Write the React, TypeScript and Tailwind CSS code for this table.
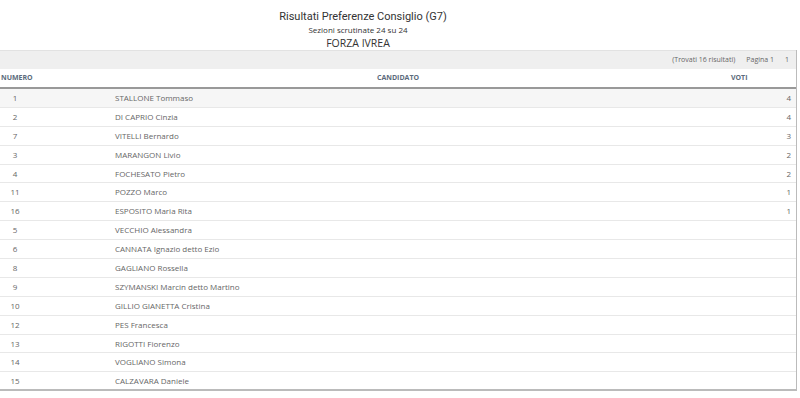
import React from "react";

const rows: [string, string, string][] = [
  ["1", "STALLONE Tommaso", "4"],
  ["2", "DI CAPRIO Cinzia", "4"],
  ["7", "VITELLI Bernardo", "3"],
  ["3", "MARANGON Livio", "2"],
  ["4", "FOCHESATO Pietro", "2"],
  ["11", "POZZO Marco", "1"],
  ["16", "ESPOSITO Maria Rita", "1"],
  ["5", "VECCHIO Alessandra", ""],
  ["6", "CANNATA Ignazio detto Ezio", ""],
  ["8", "GAGLIANO Rossella", ""],
  ["9", "SZYMANSKI Marcin detto Martino", ""],
  ["10", "GILLIO GIANETTA Cristina", ""],
  ["12", "PES Francesca", ""],
  ["13", "RIGOTTI Fiorenzo", ""],
  ["14", "VOGLIANO Simona", ""],
  ["15", "CALZAVARA Daniele", ""],
];

export default function App() {
  return (
    <div
      className="w-[800px] h-[398px] bg-white text-[#555] overflow-hidden"
      style={{ fontFamily: '"Open Sans", "Noto Sans", sans-serif' }}
    >
      <div className="flex flex-col items-center pt-[10px] pr-[84px] h-[50px] text-[#333]">
        <div className="text-[11px] leading-[14px] pl-[10px]" style={{ fontFamily: 'Roboto, sans-serif' }}>
          Risultati Preferenze Consiglio (G7)
        </div>
        <div className="text-[8px] leading-[12px]">Sezioni scrutinate 24 su 24</div>
        <div className="text-[10.5px] leading-[14px]">FORZA IVREA</div>
      </div>
      <div className="w-[797px] border-r border-[#bbb]">
        <div className="h-[19px] bg-[#efefef] border-t border-[#e2e2e2] flex items-center justify-end text-[7px] text-[#666] pr-[7px]">
          <span>(Trovati 16 risultati)</span>
          <span className="ml-[11px]">Pagina 1</span>
          <span className="ml-[11px]">1</span>
        </div>
        <div className="h-[20px] flex items-center border-b-2 border-[#999] text-[7px] font-bold text-[#5b6b7c]">
          <div className="w-[100px] pl-[1px]">NUMERO</div>
          <div className="flex-1 text-center">CANDIDATO</div>
          <div className="w-[100px] pl-[35px]">VOTI</div>
        </div>
        {rows.map(([n, name, v], i) => (
          <div
            key={i}
            className={`h-[18.9px] flex items-center border-b border-[#e8e8e8] text-[8px] text-[#666] ${i === 0 ? "bg-[#f6f6f6]" : ""} ${i === rows.length - 1 ? "border-b-2 border-b-[#bbb]" : ""}`}
          >
            <div className="w-[30px] text-center">{n}</div>
            <div className="w-[85px]" />
            <div className="flex-1">{name}</div>
            <div className="w-[40px] text-right pr-[5px]">{v}</div>
          </div>
        ))}
      </div>
    </div>
  );
}
